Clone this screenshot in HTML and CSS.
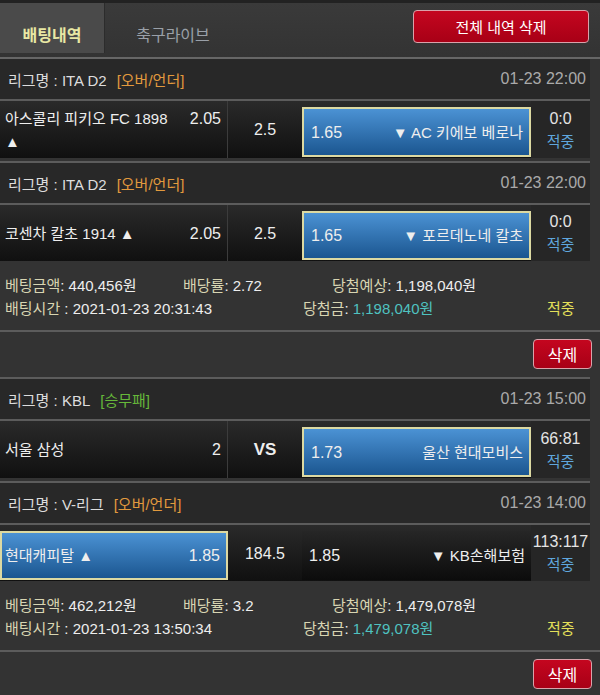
FILE: index.html
```html
<!DOCTYPE html>
<html lang="ko">
<head>
    <meta charset="UTF-8">
    <meta name="viewport" content="width=device-width, initial-scale=1.0">
    <title>배팅내역</title>
    <link rel="stylesheet" href="styles.css">
</head>
<body>
    <header class="top">
        <div class="tabs">
            <a class="tab active">배팅내역</a>
            <a class="tab">축구라이브</a>
        </div>
        <button class="btn-red btn-clear">전체 내역 삭제</button>
    </header>

    <!-- bet 1 -->
    <div class="bet">
        <div class="game">
            <div class="league">
                <span>리그명 : ITA D2</span>
                <span class="type ou">[오버/언더]</span>
                <span class="time">01-23 22:00</span>
            </div>
            <div class="match">
                <div class="side home">
                    <div class="side-in">
                        <span class="team">아스콜리 피키오 FC 1898<br>▲</span>
                        <span class="odds">2.05</span>
                    </div>
                </div>
                <div class="point">2.5</div>
                <div class="side away picked">
                    <span class="odds">1.65</span>
                    <span class="team">▼ AC 키에보 베로나</span>
                </div>
                <div class="score">0:0<span class="hit">적중</span></div>
            </div>
        </div>

        <div class="game last">
            <div class="league">
                <span>리그명 : ITA D2</span>
                <span class="type ou">[오버/언더]</span>
                <span class="time">01-23 22:00</span>
            </div>
            <div class="match">
                <div class="side home">
                    <div class="side-in">
                        <span class="team">코센차 칼초 1914 ▲</span>
                        <span class="odds">2.05</span>
                    </div>
                </div>
                <div class="point">2.5</div>
                <div class="side away picked">
                    <span class="odds">1.65</span>
                    <span class="team">▼ 포르데노네 칼초</span>
                </div>
                <div class="score">0:0<span class="hit">적중</span></div>
            </div>
        </div>

        <div class="info">
            <div class="info-row">
                <span class="c1"><em>베팅금액</em>: 440,456원</span>
                <span class="c2"><em>배당률</em>: 2.72</span>
                <span class="c3"><em>당첨예상</em>: 1,198,040원</span>
            </div>
            <div class="info-row">
                <span class="d1"><em>배팅시간</em> : 2021-01-23 20:31:43</span>
                <span class="d2"><em>당첨금</em>: <b class="win">1,198,040원</b></span>
                <span class="result">적중</span>
            </div>
        </div>
        <div class="actions">
            <button class="btn-red btn-del">삭제</button>
        </div>
    </div>

    <!-- bet 2 -->
    <div class="bet">
        <div class="game">
            <div class="league">
                <span>리그명 : KBL</span>
                <span class="type wdl">[승무패]</span>
                <span class="time">01-23 15:00</span>
            </div>
            <div class="match">
                <div class="side home">
                    <div class="side-in">
                        <span class="team">서울 삼성</span>
                        <span class="odds">2</span>
                    </div>
                </div>
                <div class="point vs">VS</div>
                <div class="side away picked">
                    <span class="odds">1.73</span>
                    <span class="team">울산 현대모비스</span>
                </div>
                <div class="score">66:81<span class="hit">적중</span></div>
            </div>
        </div>

        <div class="game last">
            <div class="league">
                <span>리그명 : V-리그</span>
                <span class="type ou">[오버/언더]</span>
                <span class="time">01-23 14:00</span>
            </div>
            <div class="match">
                <div class="side home picked">
                    <div class="side-in">
                        <span class="team">현대캐피탈 ▲</span>
                        <span class="odds">1.85</span>
                    </div>
                </div>
                <div class="point">184.5</div>
                <div class="side away">
                    <span class="odds">1.85</span>
                    <span class="team">▼ KB손해보험</span>
                </div>
                <div class="score">113:117<span class="hit">적중</span></div>
            </div>
        </div>

        <div class="info">
            <div class="info-row">
                <span class="c1"><em>베팅금액</em>: 462,212원</span>
                <span class="c2"><em>배당률</em>: 3.2</span>
                <span class="c3"><em>당첨예상</em>: 1,479,078원</span>
            </div>
            <div class="info-row">
                <span class="d1"><em>배팅시간</em> : 2021-01-23 13:50:34</span>
                <span class="d2"><em>당첨금</em>: <b class="win">1,479,078원</b></span>
                <span class="result">적중</span>
            </div>
        </div>
        <div class="actions">
            <button class="btn-red btn-del">삭제</button>
        </div>
    </div>
</body>
</html>
```

FILE: styles.css
```css
body {
    margin: 0;
    background-color: #333333;
    color: #eeeeee;
    font-family: "Liberation Sans", "Noto Sans CJK KR", sans-serif;
    font-size: 15px;
}

/* top bar */
.top {
    display: flex;
    justify-content: space-between;
    align-items: flex-start;
    height: 54px;
    border-top: 3px solid #222222;
    border-bottom: 2px solid #666666;
    background: linear-gradient(#3a3a3a, #333333);
}

.tabs {
    display: flex;
    height: 50px;
}

.tab {
    display: flex;
    align-items: center;
    justify-content: center;
    width: 136px;
    padding-top: 12px;
    color: #9aa0a8;
    font-size: 16px;
}

.tab.active {
    width: 104px;
    background-color: #4a4a4a;
    border-right: 1px solid #2c2c2c;
    color: #e8e8a4;
    font-weight: bold;
}

.btn-red {
    background: linear-gradient(#c4061f, #a80016);
    color: white;
    border: 1px solid #d9a2aa;
    border-radius: 4px;
    font-family: inherit;
    cursor: pointer;
}

.btn-clear {
    width: 176px;
    height: 33px;
    margin: 7px 11px 0 0;
    font-size: 15px;
}

/* games */
.game {
    margin-right: 10px;
    border-bottom: 2px solid #5c5c5c;
}

.game.last {
    border-bottom: none;
}

.league {
    display: flex;
    align-items: center;
    height: 40px;
    padding: 0 4px 0 8px;
    background-color: #282828;
    border-bottom: 2px solid #5c5c5c;
    color: #dddddd;
}

.type {
    margin-left: 10px;
}

.type.ou {
    color: #e29a3e;
}

.type.wdl {
    color: #66b83a;
}

.time {
    margin-left: auto;
    color: #aaaaaa;
    font-size: 16px;
}

.match {
    display: grid;
    grid-template-columns: 228px 74px 229px 1fr;
    height: 57px;
    margin-bottom: 3px;
    background: linear-gradient(#2a2a2a, #101010);
    line-height: 23px;
}

.game.last .match {
    height: 56px;
    margin-bottom: 0;
}

.side {
    display: flex;
    align-items: center;
    padding: 0 6px 0 5px;
}

.odds {
    font-size: 16px;
}

.home {
    border-right: 1px solid #3c3c3c;
}

.side-in {
    display: flex;
    align-items: baseline;
    justify-content: space-between;
    width: 100%;
}

.away {
    justify-content: space-between;
    margin: 6px 0 1px;
    padding-left: 7px;
    background: linear-gradient(#262626, #0c0c0c);
}

.side.picked {
    background: linear-gradient(#4b92d4, #1b5690);
    border: 2px solid #dcd9a2;
}

.home.picked {
    margin: 6px 0 1px;
    padding-left: 3px;
}

.point {
    display: flex;
    align-items: center;
    justify-content: center;
    font-size: 16px;
}

.point.vs {
    font-size: 17px;
    font-weight: bold;
}

.score {
    display: flex;
    flex-direction: column;
    align-items: center;
    justify-content: center;
    background-color: #262626;
    color: #e4e4e4;
    font-size: 16px;
}

.hit {
    color: #5fa6dc;
    font-size: 15px;
}

/* bet summary */
.info {
    padding: 13px 0 10px 5px;
    border-bottom: 2px solid #5c5c5c;
    line-height: 23px;
}

.info-row {
    display: flex;
}

.info em {
    font-style: normal;
    color: #d8d5b2;
}

.c1 {
    width: 178px;
}

.c2 {
    width: 149px;
}

.d1 {
    width: 298px;
}

.d2 {
    width: 244px;
}

.win {
    font-weight: normal;
    color: #4fc2c0;
}

.result {
    color: #e3e05a;
}

.actions {
    display: flex;
    justify-content: flex-end;
    height: 45px;
    margin-right: 10px;
    border-bottom: 2px solid #5c5c5c;
}

.btn-del {
    width: 59px;
    height: 30px;
    margin: 7px -2px 0 0;
    font-size: 16px;
}
```
